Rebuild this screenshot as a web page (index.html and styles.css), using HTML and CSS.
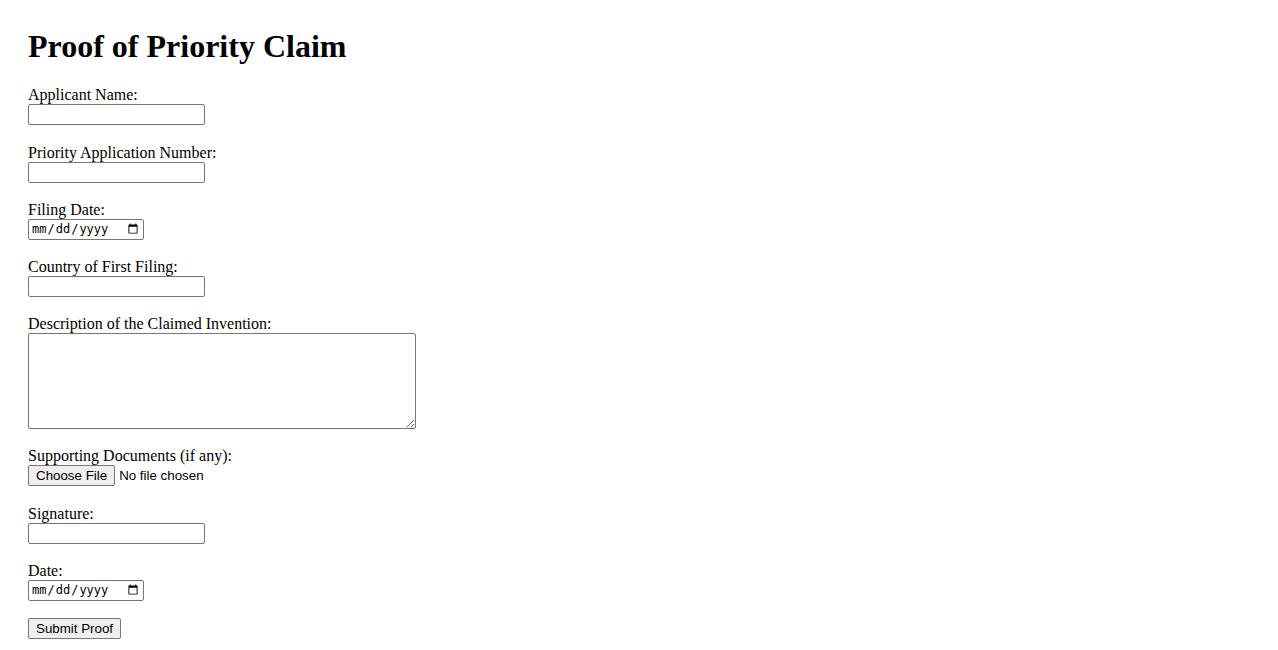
FILE: index.html
```html
<!DOCTYPE html>
<html lang="en">
<head>
<meta charset="utf-8">
<title>Proof of Priority Claim</title>
<link rel="stylesheet" href="styles.css">
</head>
<body>
<div class="page">
  <h1 class="title">Proof of Priority Claim</h1>
  <form class="form">
    <div class="field">
      <label class="label" for="applicant">Applicant Name:</label>
      <input class="text-input" type="text" id="applicant">
    </div>
    <div class="field">
      <label class="label" for="number">Priority Application Number:</label>
      <input class="text-input" type="text" id="number">
    </div>
    <div class="field">
      <label class="label" for="filing">Filing Date:</label>
      <input class="date-input" type="date" id="filing">
    </div>
    <div class="field">
      <label class="label" for="country">Country of First Filing:</label>
      <input class="text-input" type="text" id="country">
    </div>
    <div class="field">
      <label class="label" for="desc">Description of the Claimed Invention:</label>
      <textarea class="textarea" id="desc"></textarea>
    </div>
    <div class="field">
      <label class="label" for="docs">Supporting Documents (if any):</label>
      <input class="file-input" type="file" id="docs">
    </div>
    <div class="field">
      <label class="label" for="sig">Signature:</label>
      <input class="text-input" type="text" id="sig">
    </div>
    <div class="field">
      <label class="label" for="date">Date:</label>
      <input class="date-input" type="date" id="date">
    </div>
    <button class="submit" type="submit">Submit Proof</button>
  </form>
</div>
</body>
</html>
```

FILE: styles.css
```css
html, body {
  background: #fff;
}
body {
  margin: 8px;
  font-family: "Liberation Serif", "Times New Roman", serif;
  font-size: 16px;
  color: #000;
}
.page {
  padding: 20px;
}
.title {
  font-size: 32px;
  font-weight: bold;
  margin: 0 0 20.44px 0;
}
.field {
  margin-bottom: 17.2px;
}
.label {
  display: block;
  padding-top: 1px;
  line-height: 18px;
}
.text-input {
  display: block;
  box-sizing: border-box;
  width: 177px;
  height: 21px;
  margin: 0;
  padding: 1px 2px;
  border: 1px solid #767676;
  border-radius: 2px;
  font-family: "Liberation Sans", Arial, sans-serif;
  font-size: 13.33px;
}
.date-input {
  display: block;
  box-sizing: border-box;
  width: 116px;
  height: 21px;
  margin: 0;
  padding: 1px 2px;
  border: 1px solid #767676;
  border-radius: 2px;
  font-family: "DejaVu Sans Mono", "Liberation Mono", monospace;
  font-size: 12px;
}
.textarea {
  display: block;
  box-sizing: border-box;
  width: 388px;
  height: 96px;
  margin: 0;
  padding: 2px;
  border: 1px solid #767676;
  border-radius: 2px;
  font-family: "Liberation Mono", monospace;
  font-size: 13.33px;
  resize: both;
}
.file-input {
  display: block;
  margin: 0;
  height: 21px;
  font-family: "Liberation Sans", Arial, sans-serif;
  font-size: 13.33px;
}
.file-input::file-selector-button {
  font-family: "Liberation Sans", Arial, sans-serif;
  font-size: 13.33px;
  height: 21px;
  padding: 1px 7px;
  margin-right: 4px;
  background: #efefef;
  border: 1px solid #767676;
  border-radius: 2px;
  color: #000;
}
.submit {
  display: block;
  box-sizing: border-box;
  height: 21px;
  margin: 0;
  padding: 1px 7px;
  background: #efefef;
  border: 1px solid #767676;
  border-radius: 2px;
  font-family: "Liberation Sans", Arial, sans-serif;
  font-size: 13.33px;
  color: #000;
}
```
